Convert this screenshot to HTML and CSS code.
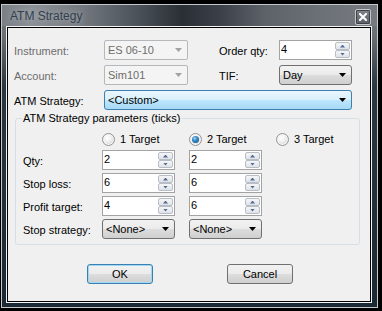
FILE: index.html
```html
<!DOCTYPE html>
<html lang="en">

<head>
    <meta charset="UTF-8">
    <title>ATM Strategy</title>
    <link rel="stylesheet" href="styles.css">
</head>

<body>
    <div class="window">
        <div class="titlebar">
            <span class="title">ATM Strategy</span>
            <span class="close">
                <svg width="8" height="8" viewBox="0 0 8 8">
                    <path d="M1 1 L7 7 M7 1 L1 7" stroke="#fff" stroke-width="2" stroke-linecap="square" />
                </svg>
            </span>
        </div>
        <div class="edge">
            <div class="client">
                <!-- top settings -->
                <div class="top-grid">
                    <span class="lbl disabled">Instrument:</span>
                    <div class="combo disabled"><span>ES 06-10</span><span class="arrow"></span></div>
                    <span></span>
                    <span class="lbl">Order qty:</span>
                    <div class="spin">
                        <span class="val">4</span>
                        <span class="updown"><span class="up"></span><span class="down"></span></span>
                    </div>

                    <span class="lbl disabled">Account:</span>
                    <div class="combo disabled"><span>Sim101</span><span class="arrow"></span></div>
                    <span></span>
                    <span class="lbl">TIF:</span>
                    <div class="combo"><span>Day</span><span class="arrow"></span></div>

                    <span class="lbl">ATM Strategy:</span>
                    <div class="combo hot wide"><span>&lt;Custom&gt;</span><span class="arrow"></span></div>
                </div>

                <fieldset class="group">
                    <legend>ATM Strategy parameters (ticks)</legend>
                    <div class="param-grid">
                        <label class="radio c2"><i></i>1 Target</label>
                        <label class="radio c4"><i class="on"></i>2 Target</label>
                        <label class="radio c6"><i></i>3 Target</label>

                        <span class="lbl">Qty:</span>
                        <div class="spin c2"><span class="val">2</span><span class="updown"><span class="up"></span><span class="down"></span></span></div>
                        <div class="spin c4"><span class="val">2</span><span class="updown"><span class="up"></span><span class="down"></span></span></div>

                        <span class="lbl">Stop loss:</span>
                        <div class="spin c2"><span class="val">6</span><span class="updown"><span class="up"></span><span class="down"></span></span></div>
                        <div class="spin c4"><span class="val">6</span><span class="updown"><span class="up"></span><span class="down"></span></span></div>

                        <span class="lbl">Profit target:</span>
                        <div class="spin c2"><span class="val">4</span><span class="updown"><span class="up"></span><span class="down"></span></span></div>
                        <div class="spin c4"><span class="val">6</span><span class="updown"><span class="up"></span><span class="down"></span></span></div>

                        <span class="lbl">Stop strategy:</span>
                        <div class="combo c2"><span>&lt;None&gt;</span><span class="arrow"></span></div>
                        <div class="combo c4"><span>&lt;None&gt;</span><span class="arrow"></span></div>
                    </div>
                </fieldset>

                <div class="buttons">
                    <button class="btn default">OK</button>
                    <button class="btn">Cancel</button>
                </div>
            </div>
        </div>
    </div>
</body>

</html>
```

FILE: styles.css
```css
/* General styles */
* {
    box-sizing: border-box;
}

body {
    margin: 0;
    width: 382px;
    height: 311px;
    overflow: hidden;
    background-color: #000;
    font-family: "Liberation Sans", Arial, sans-serif;
    font-size: 11px;
    color: #000;
}

/* Window frame */
.window {
    margin: 4px 0 0 1px;
    width: 377px;
    height: 304px;
    border: 1px solid #c4c8cc;
    display: flex;
    flex-direction: column;
    background: linear-gradient(to bottom, #70767c 0, #6a7076 30px, #2c3740 80px, #1b2934 100%);
}

.titlebar {
    height: 21px;
    display: flex;
    justify-content: space-between;
    align-items: center;
    padding: 0 6px 0 8px;
    background: linear-gradient(90deg, #7a8086 0%, #8a9095 8%, #767c82 20%, #4c5259 36%, #2a2e35 48%, #3b4048 58%, #5d6269 70%, #6c7177 85%, #777b80 100%);
}

.title {
    font-size: 12px;
    color: #34404e;
    text-shadow: 0 0 6px rgba(255, 255, 255, 0.45);
}

.close {
    align-self: flex-end;
    margin-bottom: 1px;
    width: 16px;
    height: 16px;
    border: 1px solid #c3c7cb;
    border-radius: 2px;
    background: linear-gradient(#80858b, #5a5f65);
    box-shadow: inset 0 0 0 1px #3e4349;
    display: flex;
    align-items: center;
    justify-content: center;
}

.edge {
    flex: 1;
    display: flex;
    margin: 0 5px 4px 4px;
    border: 1px solid #f4f4f4;
}

.client {
    flex: 1;
    border: 1px solid #000;
    background-color: #f0f0f0;
}

/* Top settings */
.top-grid {
    display: grid;
    grid-template-columns: 90px 84px 31px 60px 73px;
    grid-template-rows: repeat(3, 20px);
    row-gap: 5px;
    padding: 12px 0 0 6px;
}

.lbl {
    align-self: center;
    line-height: 13px;
    padding-top: 2px;
    white-space: nowrap;
}

.lbl.disabled {
    color: #6d6d6d;
}

.wide {
    grid-column: 2 / 6;
}

/* Combo boxes */
.combo {
    display: flex;
    align-items: center;
    justify-content: space-between;
    padding: 0 5px 0 3px;
    border: 1px solid #707070;
    border-radius: 3px;
    background: linear-gradient(#f2f2f2 0%, #ebebeb 50%, #dddddd 50%, #cfcfcf 100%);
    white-space: nowrap;
}

.combo .arrow {
    width: 7px;
    height: 4px;
    background-color: #000;
    clip-path: polygon(0 0, 100% 0, 50% 100%);
}

.combo.hot {
    border-color: #3c7fb1;
    background: linear-gradient(#eaf6fd 0%, #d9f0fc 50%, #bee6fd 50%, #a7d9f5 100%);
}

.combo.disabled {
    color: #6d6d6d;
    border-color: #b4b8bb;
    border-radius: 2px;
    background: #f4f4f4;
}

.combo.disabled .arrow {
    background-color: #a2a2a2;
}

/* Numeric up/down */
.spin {
    display: flex;
    border: 1px solid #a3a3a3;
    background-color: #fff;
}

.spin .val {
    flex: 1;
    line-height: 13px;
    padding: 2px 0 0 1px;
}

.updown {
    width: 16px;
    display: flex;
    flex-direction: column;
    padding: 1px 1px 1px 0;
}

.updown span {
    flex: 1;
    display: flex;
    align-items: center;
    justify-content: center;
    border: 1px solid #b7bec8;
    border-radius: 2px;
    background: linear-gradient(#f6f6f6, #dfe2e6);
}

.updown span::before {
    content: "";
    width: 5px;
    height: 3px;
    background-color: #4f6a9a;
}

.updown .up::before {
    clip-path: polygon(50% 0, 100% 100%, 0 100%);
}

.updown .down::before {
    clip-path: polygon(0 0, 100% 0, 50% 100%);
}

/* Group box */
.group {
    margin: 2px 10px 0 7px;
    padding: 0;
    border: 1px solid #d5dfe5;
    border-radius: 3px;
}

.group legend {
    margin-left: 6px;
    padding: 0 1px;
    line-height: 13px;
}

.param-grid {
    display: grid;
    grid-template-columns: 79px 73px 14px 73px 14px 1fr;
    grid-template-rows: 16px repeat(4, 20px);
    row-gap: 3px;
    padding: 6px 0 5px 7px;
}

.param-grid .lbl {
    grid-column: 1;
}

.c2 {
    grid-column: 2;
}

.c4 {
    grid-column: 4;
}

.c6 {
    grid-column: 6;
}

.radio {
    display: flex;
    align-items: center;
    gap: 5px;
    white-space: nowrap;
}

.radio i {
    width: 13px;
    height: 13px;
    border-radius: 50%;
    border: 1px solid #939393;
    background: radial-gradient(circle at 40% 35%, #ffffff 0, #f2f2f2 35%, #d9d9d9 75%, #cbcbcb 100%);
    box-shadow: inset 0 0 0 1px #f6f6f6;
    display: flex;
    align-items: center;
    justify-content: center;
}

.radio i.on::after {
    content: "";
    width: 7px;
    height: 7px;
    border-radius: 50%;
    background: radial-gradient(circle at 40% 35%, #a8dcf6 0, #3b8ccb 35%, #0d4a7a 100%);
}

/* Buttons */
.buttons {
    display: flex;
    gap: 74px;
    margin-top: 19px;
    padding-left: 79px;
}

.btn {
    width: 66px;
    height: 20px;
    padding: 0;
    font: inherit;
    color: #000;
    border: 1px solid #707070;
    border-radius: 3px;
    background: linear-gradient(#f2f2f2 0%, #ebebeb 50%, #dddddd 50%, #cfcfcf 100%);
}

.btn.default {
    border-color: #3c7fb1;
    box-shadow: inset 0 0 0 1px #9fd8f5;
}
```
